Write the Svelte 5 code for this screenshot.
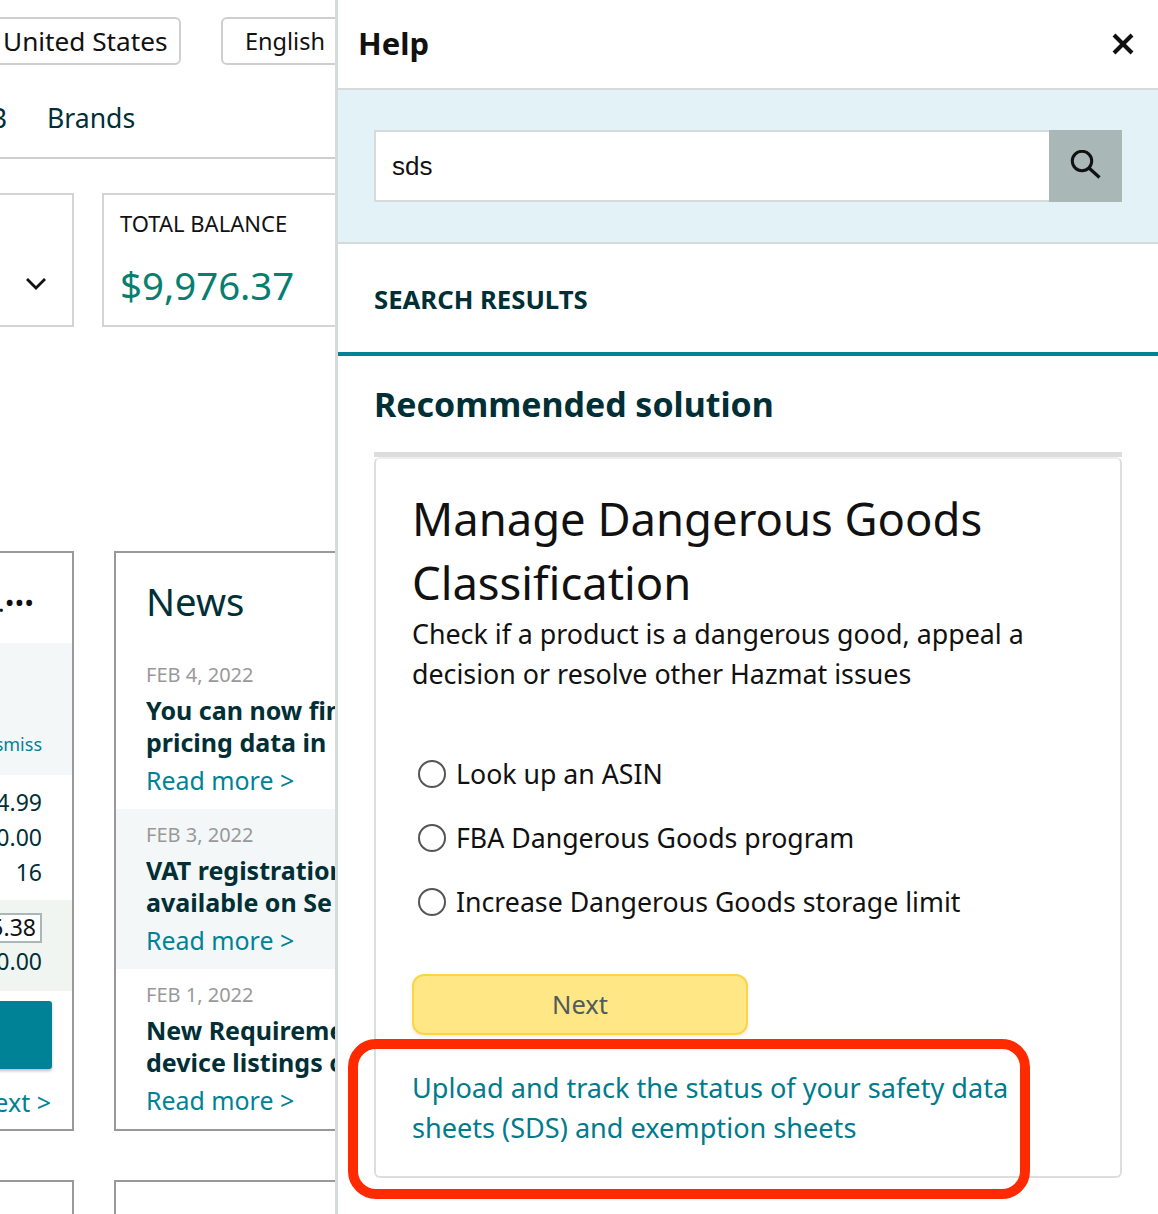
<script>
  const news = [
    { date: 'FEB 4, 2022', lines: ['You can now find', 'pricing data in'] },
    { date: 'FEB 3, 2022', lines: ['VAT registration', 'available on Se'], tint: true },
    { date: 'FEB 1, 2022', lines: ['New Requirements', 'device listings on'] }
  ];
  const options = ['Look up an ASIN', 'FBA Dangerous Goods program', 'Increase Dangerous Goods storage limit'];
</script>

<div class="page">
  <div class="behind">
    <div class="selects">
      <div class="select country">United States</div>
      <div class="select language">English</div>
    </div>
    <nav class="tabs">
      <span class="tab-cut">B2B</span>
      <span>Brands</span>
    </nav>
    <div class="balance-row">
      <div class="stat chevron-card">
        <svg viewBox="0 0 24 24" width="24" height="24" fill="none" stroke="#111" stroke-width="2.8">
          <polyline points="3 7 12 16 21 7"></polyline>
        </svg>
      </div>
      <div class="stat balance">
        <div class="stat-label">TOTAL BALANCE</div>
        <div class="stat-value">$9,976.37</div>
      </div>
    </div>
    <div class="cards-row">
      <div class="card sales">
        <div class="sales-title"><span class="dots">.•••</span></div>
        <div class="sales-band"><span class="dismiss">Dismiss</span></div>
        <div class="sales-rows">
          <div>$14.99</div>
          <div>$0.00</div>
          <div>16</div>
        </div>
        <div class="sales-green">
          <div class="price-box">$25.38</div>
          <div class="green-total">$0.00</div>
        </div>
        <div class="sales-button"></div>
        <a class="sales-next" href="#next">Next &gt;</a>
      </div>
      <div class="card news">
        <h2>News</h2>
        {#each news as item}
          <div class="news-item" class:tint={item.tint}>
            <div class="news-date">{item.date}</div>
            {#each item.lines as line}
              <div class="news-title">{line}</div>
            {/each}
            <a class="read-more" href="#more">Read more &gt;</a>
          </div>
        {/each}
      </div>
    </div>
    <div class="cards-row last">
      <div class="card stub-a"></div>
      <div class="card stub-b"></div>
    </div>
  </div>

  <aside class="help">
    <header class="help-head">
      <h1>Help</h1>
      <svg viewBox="0 0 24 24" width="24" height="24" fill="none" stroke="#111" stroke-width="4">
        <line x1="3" y1="3" x2="21" y2="21"></line>
        <line x1="21" y1="3" x2="3" y2="21"></line>
      </svg>
    </header>
    <div class="search-band">
      <div class="search-input">sds</div>
      <button class="search-btn" aria-label="Search">
        <svg viewBox="0 0 32 32" width="32" height="32" fill="none" stroke="#111" stroke-width="3">
          <circle cx="12" cy="11" r="9.7"></circle>
          <line x1="19" y1="18" x2="29.5" y2="27.5" stroke-width="3.2"></line>
        </svg>
      </button>
    </div>
    <div class="results-tab"><span>SEARCH RESULTS</span></div>
    <div class="results">
      <h3>Recommended solution</h3>
      <div class="solution-bar"></div>
      <div class="solution">
        <div class="solution-title">Manage Dangerous Goods Classification</div>
        <p class="solution-text">Check if a product is a dangerous good, appeal a decision or resolve other Hazmat issues</p>
        <div class="options">
          {#each options as option}
            <div class="option"><span class="radio"></span>{option}</div>
          {/each}
        </div>
        <button class="next">Next</button>
        <a class="sds-link" href="#sds">Upload and track the status of your safety data sheets (SDS) and exemption sheets</a>
      </div>
    </div>
    <div class="highlight"></div>
  </aside>
</div>

<style>
  :global(body) {
    margin: 0;
    background: #fff;
  }

  .page {
    display: flex;
    width: 1158px;
    height: 1214px;
    overflow: hidden;
    font-family: 'Noto Sans', 'Open Sans', sans-serif;
    color: #111;
    background: #fff;
  }

  /* --- Page behind the panel (cut off on both sides) --- */
  .behind {
    width: 335px;
    flex: none;
    overflow: hidden;
  }

  .selects {
    display: flex;
    gap: 40px;
    height: 48px;
    margin-top: 17px;
    margin-left: -40px;
    width: 500px;
  }

  .select {
    box-sizing: border-box;
    height: 48px;
    border: 2px solid #cfcfcf;
    border-radius: 6px;
    font-size: 26.2px;
    line-height: 44px;
    color: #111;
  }

  .country {
    width: 221px;
    padding-left: 41px;
  }

  .language {
    width: 200px;
    padding-left: 22px;
    font-size: 23.5px;
  }

  .tabs {
    display: flex;
    gap: 40px;
    height: 94px;
    margin-left: -16px;
    width: 420px;
    box-sizing: border-box;
    border-bottom: 2px solid #cfcfcf;
    font-size: 26.6px;
    line-height: 106px;
    color: #002f36;
  }

  .tab-cut {
    width: 23px;
    overflow: hidden;
    direction: rtl;
  }

  .balance-row {
    display: flex;
    gap: 28px;
    margin-top: 34px;
    margin-left: -60px;
    width: 700px;
  }

  .stat {
    box-sizing: border-box;
    height: 134px;
    border: 2px solid #d5d5d5;
  }

  .chevron-card {
    width: 134px;
    display: flex;
    justify-content: flex-end;
    align-items: center;
    padding: 48px 24px 0 0;
  }

  .balance {
    width: 400px;
    padding: 12px 0 0 16px;
  }

  .stat-label {
    font-size: 22px;
    line-height: 32px;
  }

  .stat-value {
    margin-top: 23px;
    font-size: 38.4px;
    line-height: 46px;
    color: #067f70;
  }

  .cards-row {
    display: flex;
    gap: 40px;
    margin-top: 224px;
    margin-left: -60px;
    width: 700px;
  }

  .cards-row.last {
    margin-top: 49px;
  }

  .card {
    box-sizing: border-box;
    border: 2px solid #999;
    height: 580px;
  }

  .sales {
    width: 134px;
    flex: none;
    text-align: right;
  }

  .sales-title {
    height: 90px;
    padding-right: 38px;
  }

  .dots {
    display: block;
    font-size: 26px;
    line-height: 26px;
    padding-top: 36px;
    white-space: nowrap;
  }

  .sales-band {
    height: 132px;
    background: #f4f7f7;
    box-sizing: border-box;
    padding: 89px 30px 0 0;
    font-size: 18px;
    line-height: 24px;
    color: #008296;
  }

  .sales-rows {
    height: 125px;
    padding: 10px 30px 0 0;
    box-sizing: border-box;
    font-size: 23px;
    line-height: 35px;
    color: #002f36;
  }

  .sales-green {
    height: 91px;
    background: #f0f5f1;
    padding: 13px 30px 0 0;
    box-sizing: border-box;
    font-size: 23px;
    line-height: 35px;
    color: #002f36;
  }

  .price-box {
    display: inline-block;
    box-sizing: border-box;
    height: 30px;
    width: 90px;
    background: #fff;
    border: 2px solid #a9b7b6;
    font-size: 23px;
    line-height: 25px;
    padding-right: 4px;
    color: #111;
    vertical-align: top;
  }

  .green-total {
    margin-top: -4px;
  }

  .sales-button {
    height: 68px;
    margin: 10px 20px 0 0;
    background: #008296;
    border-radius: 3px;
    box-shadow: 0 2px 3px rgba(0, 0, 0, 0.25);
  }

  .sales-next {
    display: block;
    margin-top: 15px;
    padding-right: 21px;
    font-size: 25px;
    line-height: 36px;
    color: #008296;
    text-decoration: none;
  }

  .news {
    width: 500px;
    flex: none;
  }

  .news h2 {
    margin: 0;
    height: 96px;
    padding: 21px 0 0 30px;
    box-sizing: border-box;
    font-size: 38.3px;
    line-height: 54px;
    font-weight: 400;
    color: #002f36;
  }

  .news-item {
    box-sizing: border-box;
    height: 160px;
    padding: 12px 0 0 30px;
    white-space: nowrap;
  }

  .news-item.tint {
    background: #f4f7f7;
  }

  .news-date {
    font-size: 20px;
    line-height: 28px;
    color: #999;
  }

  .news-title {
    font-size: 25px;
    line-height: 32px;
    font-weight: 700;
    color: #002f36;
  }

  .news-item .news-date + .news-title {
    margin-top: 5px;
  }

  .read-more {
    display: block;
    margin-top: 4px;
    font-size: 24.9px;
    line-height: 36px;
    color: #008296;
    text-decoration: none;
  }

  .stub-a {
    width: 134px;
    flex: none;
  }

  .stub-b {
    width: 500px;
    flex: none;
  }

  /* --- Help panel --- */
  .help {
    position: relative;
    box-sizing: border-box;
    width: 823px;
    flex: none;
    border-left: 3px solid #d5dbdb;
  }

  .help-head {
    display: flex;
    justify-content: space-between;
    align-items: center;
    height: 88px;
    padding: 0 23px 2px 20px;
    box-sizing: border-box;
  }

  .help-head svg {
    margin-top: 2px;
  }

  h1 {
    margin: 0;
    font-size: 31px;
    font-weight: 700;
    color: #111;
  }

  .search-band {
    display: flex;
    box-sizing: border-box;
    height: 156px;
    padding: 40px 36px;
    background: #e3f2f6;
    border-top: 2px solid #d5dbdb;
    border-bottom: 2px solid #d5dbdb;
  }

  .search-input {
    flex: 1;
    box-sizing: border-box;
    height: 72px;
    border: 2px solid #d5dbdb;
    border-right: 0;
    background: #fff;
    padding-left: 16px;
    font-family: 'Liberation Sans', Arial, sans-serif;
    font-size: 26px;
    line-height: 68px;
    color: #111;
  }

  .search-btn {
    width: 73px;
    height: 72px;
    border: 0;
    padding: 0;
    background: #a9b7b6;
    display: flex;
    align-items: center;
    justify-content: center;
  }

  .results-tab {
    box-sizing: border-box;
    height: 112px;
    padding: 38px 0 0 36px;
    border-bottom: 4px solid #008296;
    font-size: 25.7px;
    line-height: 36px;
    font-weight: 700;
    color: #002f36;
  }

  .results {
    padding: 0 36px;
  }

  h3 {
    margin: 0;
    height: 96px;
    box-sizing: border-box;
    padding-top: 23px;
    font-size: 33.9px;
    line-height: 50px;
    font-weight: 700;
    color: #002f36;
  }

  .solution-bar {
    height: 5px;
    background: #ddd;
  }

  .solution {
    box-sizing: border-box;
    height: 721px;
    padding: 27px 36px 0;
    border: 2px solid #ddd;
    border-top-color: #eee;
    border-radius: 6px;
  }

  .solution-title {
    font-size: 45.4px;
    line-height: 64px;
    color: #111;
  }

  .solution-text {
    margin: 0;
    font-size: 26.8px;
    line-height: 40px;
    color: #111;
  }

  .options {
    display: flex;
    flex-direction: column;
    gap: 24px;
    margin-top: 60px;
  }

  .option {
    display: flex;
    align-items: center;
    gap: 10px;
    padding-left: 6px;
    font-size: 26.7px;
    line-height: 40px;
    color: #111;
  }

  .radio {
    box-sizing: border-box;
    width: 28px;
    height: 28px;
    border: 2px solid #555;
    border-radius: 50%;
  }

  .next {
    display: block;
    width: 336px;
    height: 61px;
    margin-top: 52px;
    border: 2px solid #fdd544;
    border-radius: 12px;
    background: #fee784;
    box-shadow: 0 2px 4px rgba(0, 0, 0, 0.08);
    font-family: inherit;
    font-size: 25.5px;
    line-height: 1;
    padding-bottom: 1px;
    color: #4f5b5c;
  }

  .sds-link {
    display: block;
    margin-top: 33px;
    font-size: 27.1px;
    line-height: 40px;
    color: #007b8d;
    text-decoration: none;
  }

  .highlight {
    position: absolute;
    left: 10px;
    top: 1039px;
    box-sizing: border-box;
    width: 682px;
    height: 160px;
    border: 10px solid #ff2a00;
    border-radius: 28px;
  }
</style>
